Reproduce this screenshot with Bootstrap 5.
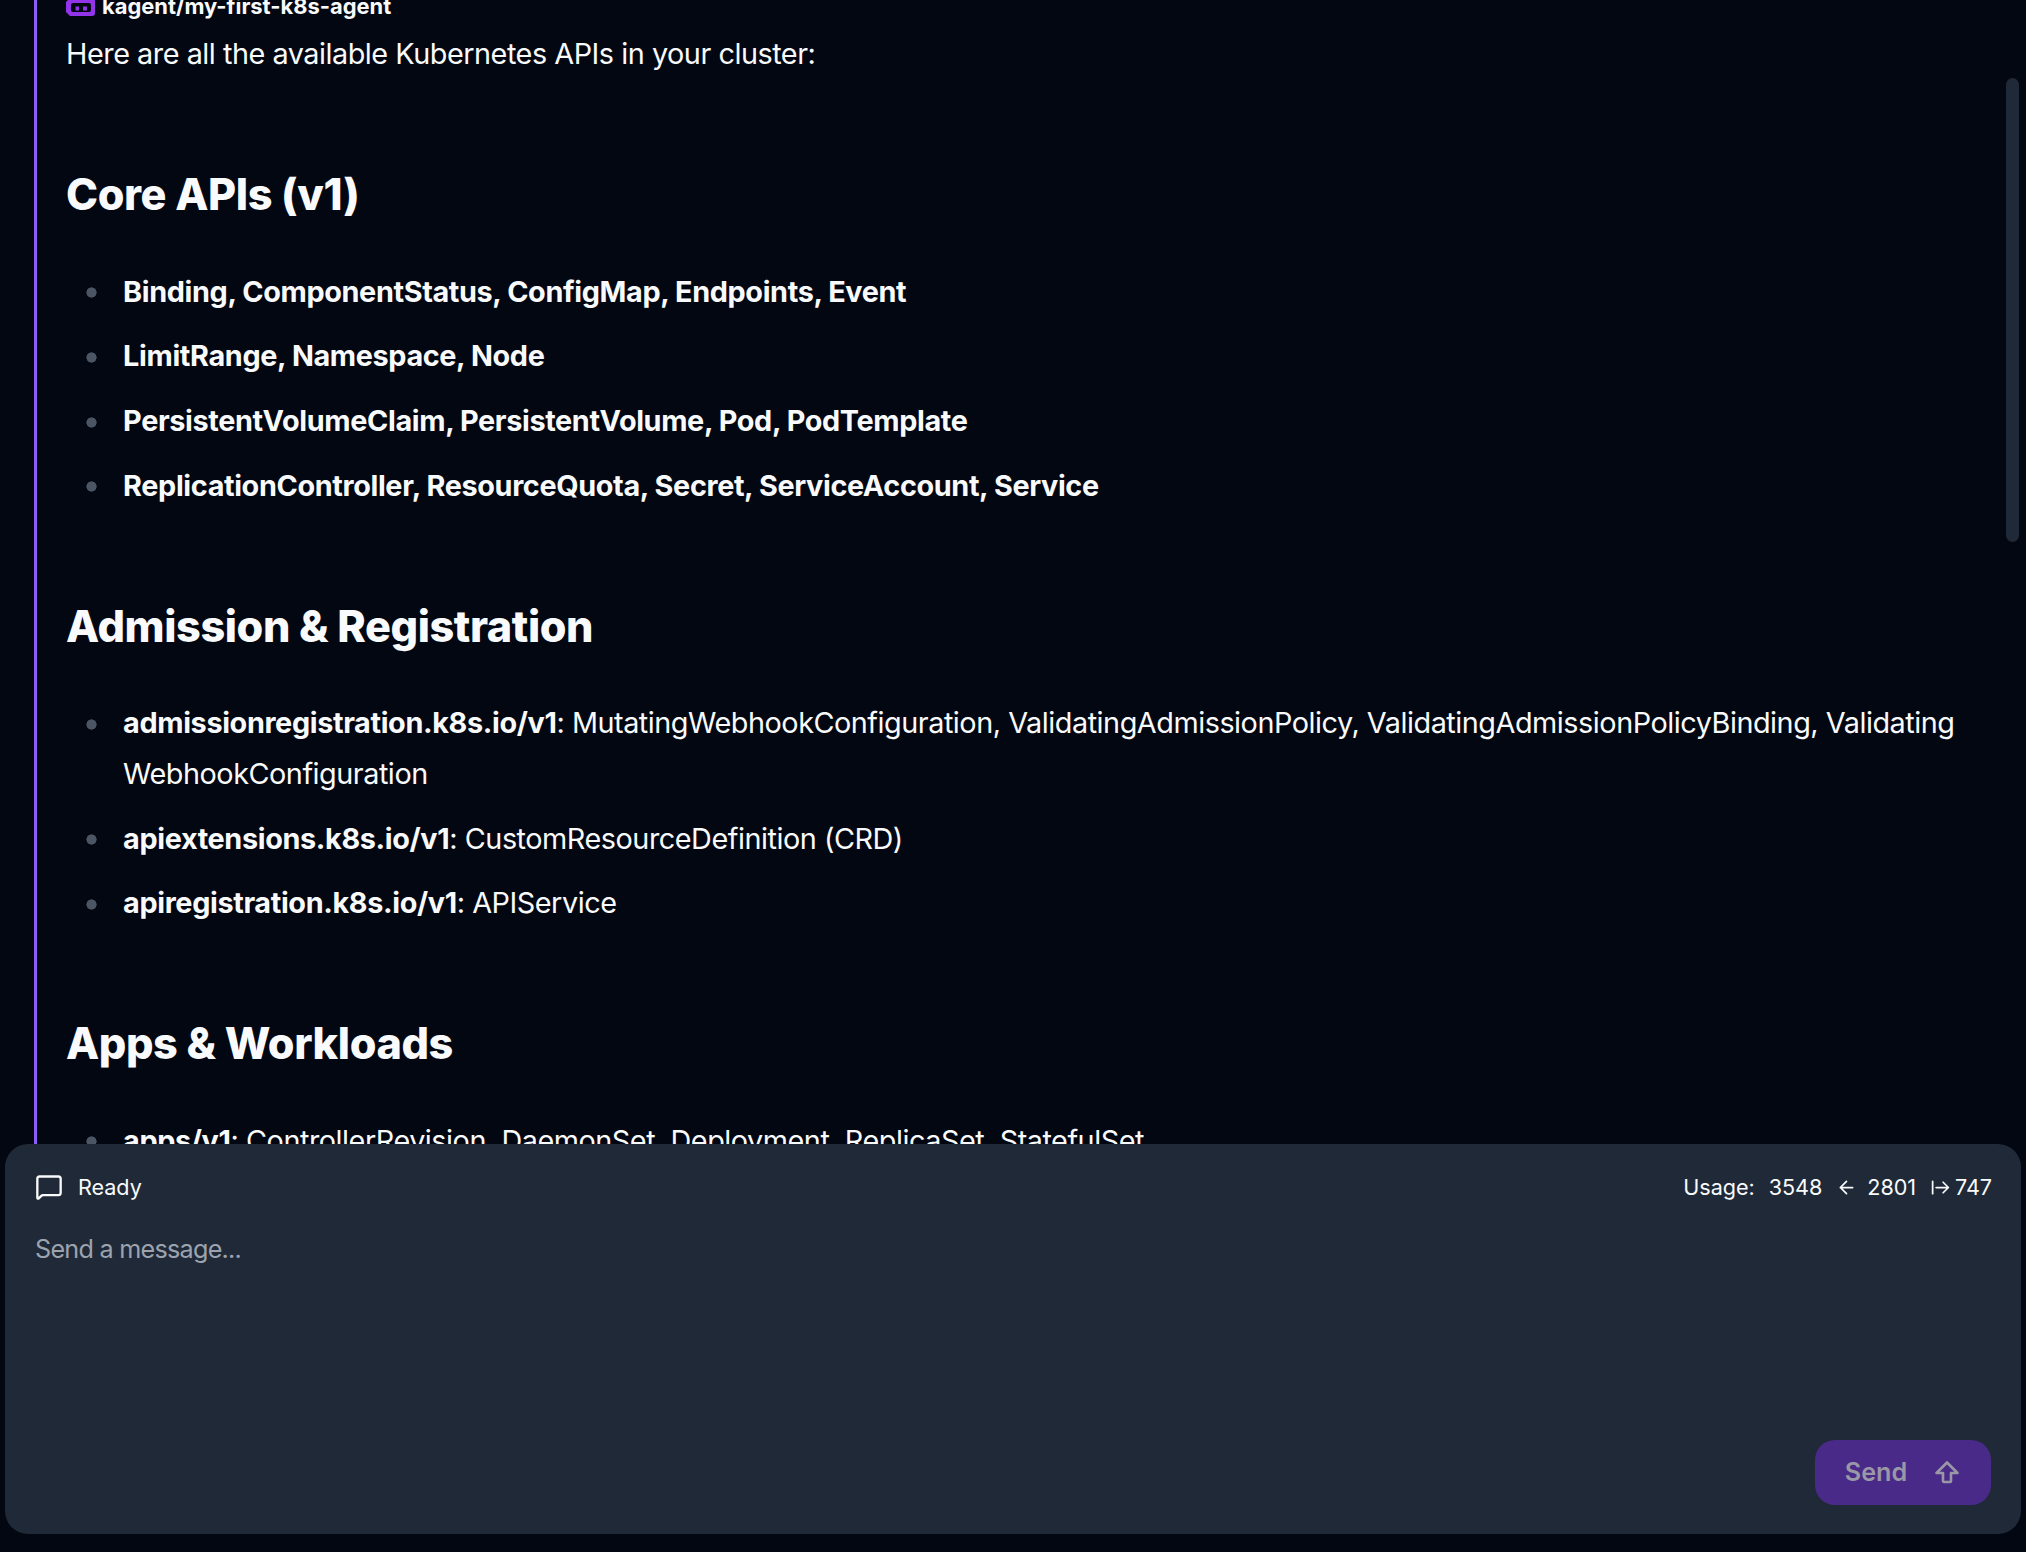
<!doctype html>
<html lang="en">
<head>
<meta charset="utf-8">
<title>kagent chat</title>
<link href="https://cdn.jsdelivr.net/npm/bootstrap@5.3.0/dist/css/bootstrap.min.css" rel="stylesheet">
<style>
html,body{height:100%;overflow:hidden;background:#030712;}
body{font-family:Inter,"Liberation Sans",sans-serif;color:#f9fafb;font-size:28.8px;line-height:1.75;}
.shell{height:1552px;}
.scroller{height:1144px;overflow:hidden;flex:none;}
.thumb{right:7px;top:78px;width:13px;height:464px;border-radius:7px;background:#1f2937;}
.msg{margin:-12px 0 0 34px;border-left:3px solid #8b5cf6;padding:0 0 0 29px;width:1958px;letter-spacing:-.47px;}
.who{font-size:21.9px;font-weight:700;line-height:36px;gap:7px;margin-bottom:5px;letter-spacing:0;}
.who svg{width:29px;height:28px;}
.msg p{margin:0 0 28.8px;}
.msg h2{font-size:43.2px;font-weight:800;line-height:57.6px;margin:86.4px 0 43.2px;letter-spacing:-.4px;}
.msg ul{list-style:none;padding-left:0;margin:0 0 36px;}
.msg li{padding-left:57.1px;margin:14.4px 0;background:radial-gradient(circle,#4b5563 4.8px,transparent 5.4px) no-repeat 19.5px 20.5px/11px 11px;}
.msg strong{font-weight:700;letter-spacing:-.36px;}
.composer{flex:none;height:390px;margin:0 5px 18px;width:2016px;background:#1f2937;border-radius:23px;padding:25px 29px 29px 30px;}
.status{font-size:21.6px;line-height:36px;letter-spacing:-.05px;}
.status svg{width:28px;height:28px;fill:none;stroke:currentColor;stroke-width:2;stroke-linecap:round;stroke-linejoin:round;}
.status-l{gap:15px;}
.usage{gap:14px;}
.usage svg{width:21px;height:21px;}
.usage span{display:inline-flex;align-items:center;gap:4px;}
.prompt{background:transparent;border:0;outline:0;resize:none;color:#f9fafb;font-size:25.2px;line-height:36px;padding:0;width:100%;margin-top:26px;font-family:inherit;letter-spacing:-.75px;}
.prompt::placeholder{color:#9ca3af;opacity:1;}
.send,.send:disabled{width:176px;height:65px;margin-right:1px;background:#4a2a88;color:#9a97a6;border:0;border-radius:20px;font-size:25.2px;font-weight:600;gap:26px;opacity:1;}
.send svg{width:28px;height:28px;fill:none;stroke:currentColor;stroke-width:2.6;stroke-linejoin:round;}
</style>
</head>
<body>
<div class="shell d-flex flex-column position-relative">
  <div class="scroller">
    <div class="msg">
      <div class="who d-flex align-items-center">
        <svg viewBox="0 0 29 28" aria-hidden="true"><path fill="#9333ea" fill-rule="evenodd" d="M4 6H26a3 3 0 0 1 3 3V21a3 3 0 0 1-3 3H4L0 20V10zM7 11a2 2 0 0 0-2 2v5a2 2 0 0 0 2 2H23a2 2 0 0 0 2-2V13a2 2 0 0 0-2-2z"/><path fill="#9333ea" d="M9.500 14.500h3.500v4h-3.500zM17 14.500h4v4h-4z"/></svg>
        <span>kagent/my-first-k8s-agent</span>
      </div>
      <p>Here are all the available Kubernetes APIs in your cluster:</p>
      <h2>Core APIs (v1)</h2>
      <ul>
        <li><strong>Binding, ComponentStatus, ConfigMap, Endpoints, Event</strong></li>
        <li><strong>LimitRange, Namespace, Node</strong></li>
        <li><strong>PersistentVolumeClaim, PersistentVolume, Pod, PodTemplate</strong></li>
        <li><strong>ReplicationController, ResourceQuota, Secret, ServiceAccount, Service</strong></li>
      </ul>
      <h2>Admission &amp; Registration</h2>
      <ul>
        <li><strong>admissionregistration.k8s.io/v1</strong>: MutatingWebhookConfiguration, ValidatingAdmissionPolicy, ValidatingAdmissionPolicyBinding, Validating<wbr>WebhookConfiguration</li>
        <li><strong>apiextensions.k8s.io/v1</strong>: CustomResourceDefinition (CRD)</li>
        <li><strong>apiregistration.k8s.io/v1</strong>: APIService</li>
      </ul>
      <h2>Apps &amp; Workloads</h2>
      <ul>
        <li><strong>apps/v1</strong>: ControllerRevision, DaemonSet, Deployment, ReplicaSet, StatefulSet</li>
      </ul>
    </div>
  </div>
  <div class="thumb position-absolute"></div>
  <div class="composer d-flex flex-column">
    <div class="status d-flex justify-content-between align-items-center">
      <div class="status-l d-flex align-items-center">
        <svg viewBox="0 0 24 24" aria-hidden="true"><path d="M22 17a2 2 0 0 1-2 2H6.800a2 2 0 0 0-1.400.6l-2.200 2.200a.7.7 0 0 1-1.200-.5V5a2 2 0 0 1 2-2h16a2 2 0 0 1 2 2z"/></svg>
        <span>Ready</span>
      </div>
      <div class="usage d-flex align-items-center">
        <span>Usage:</span>
        <span>3548</span>
        <span><svg viewBox="0 0 24 24" aria-hidden="true"><path d="M12 19l-7-7 7-7M19 12H5"/></svg>&nbsp;2801</span>
        <span><svg viewBox="0 0 24 24" aria-hidden="true"><path d="M3 5v14M21 12H7M15 18l6-6-6-6"/></svg>747</span>
      </div>
    </div>
    <textarea class="prompt flex-grow-1" placeholder="Send a message..." aria-label="Send a message"></textarea>
    <div class="d-flex justify-content-end">
      <button class="send btn d-flex align-items-center justify-content-center" type="button" disabled>
        <span>Send</span>
        <svg viewBox="0 0 28 28" aria-hidden="true"><path d="M10 22v-8H3.500L14 3.500 24.500 14H18v8a1 1 0 0 1-1 1h-6a1 1 0 0 1-1-1z"/></svg>
      </button>
    </div>
  </div>
</div>
</body>
</html>
